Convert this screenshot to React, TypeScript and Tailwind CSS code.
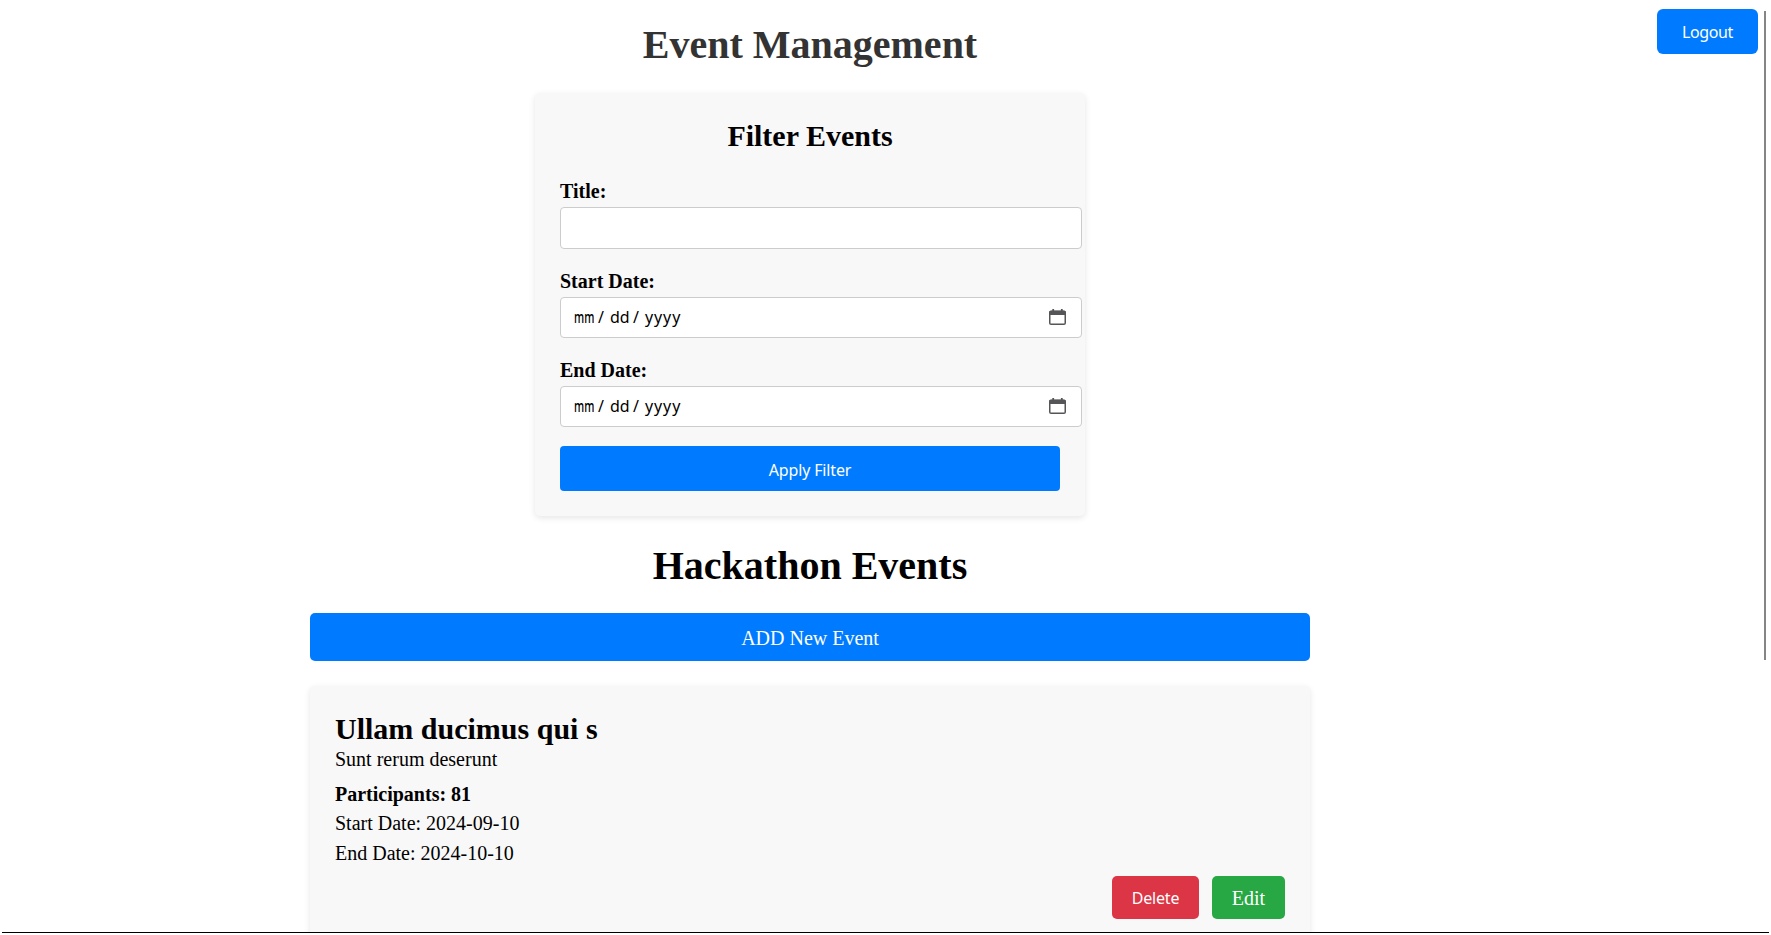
const serif = "font-['Liberation_Serif',serif]";
const sans = "font-['Noto_Sans',sans-serif]";

function CalendarIcon() {
  return (
    <svg width="17" height="16" viewBox="0 0 17 16" fill="none" className="mb-px block" aria-hidden="true">
      <rect x="0.75" y="2.3" width="15.5" height="12.9" rx="1.3" stroke="#555558" strokeWidth="1.5" />
      <path d="M0 3.5Q0 1.7 1.8 1.7H15.2Q17 1.7 17 3.5V6H0Z" fill="#555558" />
      <path d="M4.2 0V3M12.8 0V3" stroke="#555558" strokeWidth="1.8" />
    </svg>
  );
}

function DateField({ label }: { label: string }) {
  return (
    <div>
      <label className="block pt-px text-[20px] leading-[23px] font-bold">{label}</label>
      <div className="mt-[4px] flex h-[41px] w-[522px] items-center rounded-[4px] border border-[#ccc] bg-white pr-[15px] pl-[13px]">
        <div className={`flex flex-1 pb-[2px] text-[16px] leading-[22px] ${sans}`}>
          <span className="w-[24px] origin-left scale-x-[0.67] font-medium whitespace-nowrap">mm</span>
          <span className="w-[12px]">/</span>
          <span className="w-[23px]">dd</span>
          <span className="w-[12px]">/</span>
          <span className="tracking-[0.9px]">yyyy</span>
        </div>
        <CalendarIcon />
      </div>
    </div>
  );
}

export default function App() {
  return (
    <div className={`relative h-[935px] w-[1771px] overflow-hidden bg-white text-black ${serif}`}>
      <div className="mx-[2px] flex h-[933px] flex-col items-center overflow-hidden border-b border-black pr-[151px]">
        <h1 className="mt-[22px] text-[40px] leading-[46px] font-bold text-[#333]">Event Management</h1>

        <section className="mt-[25px] flex h-[423px] w-[550px] shrink-0 flex-col rounded-[5px] bg-[#f8f8f8] px-[25px] pt-[26px] shadow-[0_2px_6px_rgba(0,0,0,0.1)]">
          <h2 className="text-center text-[30px] leading-[34px] font-bold">Filter Events</h2>
          <div className="mt-[26px]">
            <label className="block pt-px text-[20px] leading-[23px] font-bold">Title:</label>
            <input className="mt-[4px] block h-[42px] w-[522px] rounded-[4px] border border-[#ccc] bg-white px-[14px]" />
          </div>
          <div className="mt-[20px] flex flex-col gap-[20px]">
            <DateField label="Start Date:" />
            <DateField label="End Date:" />
          </div>
          <button
            className={`mt-[19px] h-[45px] w-[500px] rounded-[4px] bg-[#007bff] pt-[2px] text-[16px] tracking-[-0.15px] text-white ${sans}`}
          >
            Apply Filter
          </button>
        </section>

        <h1 className="mt-[27px] text-[40px] leading-[46px] font-bold">Hackathon Events</h1>
        <button className="mt-[24px] h-[48px] w-[1000px] shrink-0 rounded-[5px] bg-[#007bff] pt-px text-[20px] text-white">
          ADD New Event
        </button>

        <article className="mt-[25px] flex h-[260px] w-[1000px] shrink-0 flex-col rounded-[5px] bg-[#f8f8f8] px-[25px] pt-[26px] shadow-[0_2px_6px_rgba(0,0,0,0.1)]">
          <h2 className="text-[30px] leading-[34px] font-bold">Ullam ducimus qui s</h2>
          <p className="mt-[2px] text-[20px] leading-[23px]">Sunt rerum deserunt</p>
          <p className="mt-[12px] text-[20px] leading-[23px] font-bold">Participants: 81</p>
          <p className="mt-[6px] text-[20px] leading-[23px]">Start Date: 2024-09-10</p>
          <p className="mt-[7px] text-[20px] leading-[23px]">End Date: 2024-10-10</p>
          <div className="mt-[11px] flex justify-end gap-[13px]">
            <button
              className={`h-[43px] w-[87px] rounded-[5px] bg-[#dc3545] text-[16px] tracking-[-0.2px] text-white ${sans}`}
            >
              Delete
            </button>
            <button className="h-[43px] w-[73px] rounded-[5px] bg-[#28a745] text-[20px] text-white">Edit</button>
          </div>
        </article>
      </div>

      <button
        className={`absolute top-[9px] right-[13px] h-[45px] w-[101px] rounded-[6px] bg-[#007bff] text-[16px] tracking-[-0.4px] text-white ${sans}`}
      >
        Logout
      </button>
      <div className="absolute top-[11px] right-[5px] h-[649px] w-[2px] bg-[#858585]" />
    </div>
  );
}
